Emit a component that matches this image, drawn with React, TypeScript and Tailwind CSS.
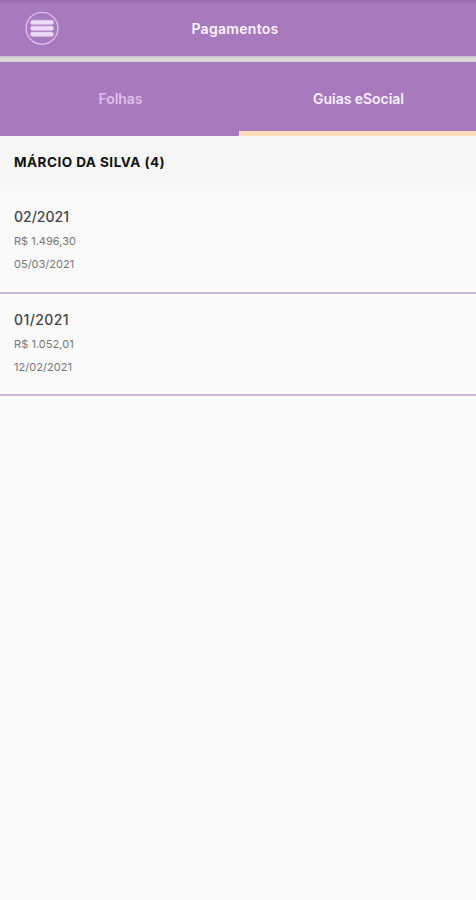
import React from 'react';
import clsx from 'clsx';

const tabs = [
  { id: 'folhas', label: 'Folhas' },
  { id: 'guias', label: 'Guias eSocial' },
];

const payments = [
  {
    period: '02/2021',
    amount: 'R$ 1.496,30',
    date: '05/03/2021',
    row: 'h-[101px] pt-[13px] border-[#c5b6d5]',
    title: 'tracking-normal',
    text: 'tracking-normal',
  },
  {
    period: '01/2021',
    amount: 'R$ 1.052,01',
    date: '12/02/2021',
    row: 'h-[102px] pt-[15px] border-[#cfb5d8]',
    title: 'tracking-[0.4px]',
    text: 'tracking-[0.05px]',
  },
];

const MenuIcon = () => (
  <svg width="34" height="34" viewBox="0 0 34 34" fill="none">
    <circle cx="17" cy="17.3" r="15.9" stroke="#dcc0ed" strokeWidth="1.3" />
    {[9.2, 15.1, 21].map((y) => (
      <rect key={y} x="5.5" y={y} width="23" height="4.4" rx="1.8" fill="#ebdcf5" stroke="#d6b8e8" strokeWidth="0.6" />
    ))}
  </svg>
);

const App = () => {
  const [activeTab, setActiveTab] = React.useState('guias');

  return (
    <div className="min-h-screen bg-[#fafafa] font-['Inter',sans-serif]">
      <header className="grid h-14 grid-cols-[1fr_auto_1fr] items-center bg-[#a67abd] bg-linear-to-b from-[#986fae] to-[#a67abd] to-[5px] pr-[6px]">
        <button className="ml-[25px] w-fit" aria-label="Menu">
          <MenuIcon />
        </button>
        <h1 className="text-[14px] font-semibold tracking-[0.3px] text-[#fcf5ff]">Pagamentos</h1>
      </header>
      <div className="h-[6px] bg-linear-to-b from-[#c6bdca] via-[#dddddd] to-[#d8d3da]" />

      {/* Tabs */}
      <nav className="grid h-[74px] grid-cols-[239px_1fr] bg-[#a67abd]">
        {tabs.map((tab) => (
          <button
            key={tab.id}
            onClick={() => setActiveTab(tab.id)}
            className={clsx(
              'border-b-[5px] pt-[4px] pl-[2px] text-[14px] font-semibold tracking-[-0.05px]',
              activeTab === tab.id ? 'border-[#f9dfb7] text-[#f9f0ff]' : 'border-transparent text-[#dcbfec]'
            )}
          >
            {tab.label}
          </button>
        ))}
      </nav>

      <section>
        <h2 className="h-[57px] bg-[#f5f5f5] bg-linear-to-b from-[#f5f5f5] from-75% to-[#f8f8f8] pt-4 pl-[14px] text-[13.5px] leading-[21px] font-bold tracking-[0.47px] text-[#111111]">
          MÁRCIO DA SILVA (4)
        </h2>
        <ul>
          {payments.map((payment) => (
            <li key={payment.period} className={clsx('border-b-2 pl-[14px]', payment.row)}>
              <p className={clsx('text-[14px] leading-[22px] font-medium text-[#444444]', payment.title)}>{payment.period}</p>
              <p className={clsx('mt-[2px] text-[11px] leading-[23px] text-[#777777]', payment.text)}>{payment.amount}</p>
              <p className={clsx('text-[11px] leading-[23px] text-[#777777]', payment.text)}>{payment.date}</p>
            </li>
          ))}
        </ul>
      </section>
    </div>
  );
};

export default App;
